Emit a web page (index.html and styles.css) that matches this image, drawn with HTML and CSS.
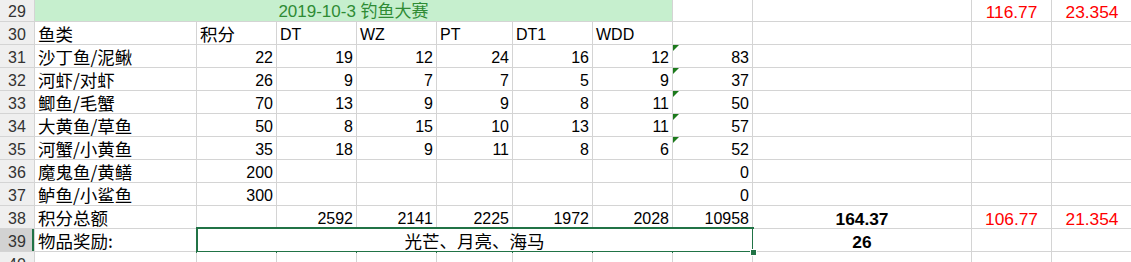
FILE: index.html
```html
<!DOCTYPE html>
<html lang="zh">
<head>
<meta charset="utf-8">
<title>钓鱼大赛</title>
<link rel="stylesheet" href="styles.css">
</head>
<body>
<div class="sheet">
  <!-- row 29 -->
  <div class="rh">29</div>
  <div class="c title span7">2019-10-3 钓鱼大赛</div>
  <div class="c"></div>
  <div class="c"></div>
  <div class="c big red ctr">116.77</div>
  <div class="c big red ctr">23.354</div>

  <!-- row 30 -->
  <div class="rh">30</div>
  <div class="c t">鱼类</div>
  <div class="c t">积分</div>
  <div class="c">DT</div>
  <div class="c">WZ</div>
  <div class="c">PT</div>
  <div class="c">DT1</div>
  <div class="c">WDD</div>
  <div class="c"></div>
  <div class="c"></div>
  <div class="c"></div>
  <div class="c"></div>

  <!-- row 31 -->
  <div class="rh">31</div>
  <div class="c t">沙丁鱼/泥鳅</div>
  <div class="c n">22</div>
  <div class="c n">19</div>
  <div class="c n">12</div>
  <div class="c n">24</div>
  <div class="c n">16</div>
  <div class="c n">12</div>
  <div class="c n flag">83</div>
  <div class="c"></div>
  <div class="c"></div>
  <div class="c"></div>

  <!-- row 32 -->
  <div class="rh">32</div>
  <div class="c t">河虾/对虾</div>
  <div class="c n">26</div>
  <div class="c n">9</div>
  <div class="c n">7</div>
  <div class="c n">7</div>
  <div class="c n">5</div>
  <div class="c n">9</div>
  <div class="c n flag">37</div>
  <div class="c"></div>
  <div class="c"></div>
  <div class="c"></div>

  <!-- row 33 -->
  <div class="rh">33</div>
  <div class="c t">鲫鱼/毛蟹</div>
  <div class="c n">70</div>
  <div class="c n">13</div>
  <div class="c n">9</div>
  <div class="c n">9</div>
  <div class="c n">8</div>
  <div class="c n">11</div>
  <div class="c n flag">50</div>
  <div class="c"></div>
  <div class="c"></div>
  <div class="c"></div>

  <!-- row 34 -->
  <div class="rh">34</div>
  <div class="c t">大黄鱼/草鱼</div>
  <div class="c n">50</div>
  <div class="c n">8</div>
  <div class="c n">15</div>
  <div class="c n">10</div>
  <div class="c n">13</div>
  <div class="c n">11</div>
  <div class="c n flag">57</div>
  <div class="c"></div>
  <div class="c"></div>
  <div class="c"></div>

  <!-- row 35 -->
  <div class="rh">35</div>
  <div class="c t">河蟹/小黄鱼</div>
  <div class="c n">35</div>
  <div class="c n">18</div>
  <div class="c n">9</div>
  <div class="c n">11</div>
  <div class="c n">8</div>
  <div class="c n">6</div>
  <div class="c n flag">52</div>
  <div class="c"></div>
  <div class="c"></div>
  <div class="c"></div>

  <!-- row 36 -->
  <div class="rh">36</div>
  <div class="c t">魔鬼鱼/黄鳝</div>
  <div class="c n">200</div>
  <div class="c"></div>
  <div class="c"></div>
  <div class="c"></div>
  <div class="c"></div>
  <div class="c"></div>
  <div class="c n">0</div>
  <div class="c"></div>
  <div class="c"></div>
  <div class="c"></div>

  <!-- row 37 -->
  <div class="rh">37</div>
  <div class="c t">鲈鱼/小鲨鱼</div>
  <div class="c n">300</div>
  <div class="c"></div>
  <div class="c"></div>
  <div class="c"></div>
  <div class="c"></div>
  <div class="c"></div>
  <div class="c n">0</div>
  <div class="c"></div>
  <div class="c"></div>
  <div class="c"></div>

  <!-- row 38 -->
  <div class="rh">38</div>
  <div class="c t">积分总额</div>
  <div class="c"></div>
  <div class="c n">2592</div>
  <div class="c n">2141</div>
  <div class="c n">2225</div>
  <div class="c n">1972</div>
  <div class="c n">2028</div>
  <div class="c n">10958</div>
  <div class="c big bold ctr">164.37</div>
  <div class="c big red ctr">106.77</div>
  <div class="c big red ctr">21.354</div>

  <!-- row 39 -->
  <div class="rh rh-sel">39</div>
  <div class="c t">物品奖励:</div>
  <div class="c t ctr span7 sel">光芒、月亮、海马<span class="handle"></span></div>
  <div class="c big bold ctr">26</div>
  <div class="c"></div>
  <div class="c"></div>

  <!-- row 40 -->
  <div class="rh">40</div>
  <div class="c"></div>
  <div class="c"></div>
  <div class="c"></div>
  <div class="c"></div>
  <div class="c"></div>
  <div class="c"></div>
  <div class="c"></div>
  <div class="c"></div>
  <div class="c"></div>
  <div class="c"></div>
  <div class="c"></div>
</div>
</body>
</html>
```

FILE: styles.css
```css
html, body {
  margin: 0;
  padding: 0;
  background: #ffffff;
  overflow: hidden;
}

.sheet {
  display: grid;
  grid-template-columns: 34px 161px 79px 79px 79px 75px 79px 79px 79px 218px 79px 80px;
  grid-template-rows: repeat(11, 22px) 22px;
  gap: 1px;
  background: #d4d4d4;
  margin-top: -1px;
  width: 1132px;
  font-family: "Liberation Sans", "Noto Sans CJK SC", sans-serif;
  font-size: 16px;
  color: #000000;
}

.rh {
  background: #efefef;
  color: #333333;
  text-align: center;
  line-height: 18px;
  padding-top: 4px;
  font-size: 16px;
  overflow: hidden;
}

.rh-sel {
  background: #d2d2d2;
  box-shadow: inset -2px 0 0 #217346;
}

.c {
  background: #ffffff;
  line-height: 18px;
  padding: 4px 3px 0 3px;
  white-space: nowrap;
  overflow: visible;
  position: relative;
  min-width: 0;
}

.t {
  font-family: "Noto Sans CJK SC", sans-serif;
  font-size: 17.5px;
  padding-top: 3px;
}

.n {
  text-align: right;
}

.ctr {
  text-align: center;
}

.big {
  font-size: 17.33px;
}

.bold {
  font-weight: bold;
}

.red {
  color: #ff0000;
}

.span7 {
  grid-column: span 7;
}

.title {
  background: #c6efce;
  color: #2e8b34;
  text-align: center;
  font-size: 17px;
}

.flag::before {
  content: "";
  position: absolute;
  left: 0;
  top: 0;
  width: 0;
  height: 0;
  border-top: 6px solid #1c7a1c;
  border-right: 6px solid transparent;
}

.sel::after {
  content: "";
  position: absolute;
  left: -1px;
  top: -2px;
  right: -2px;
  bottom: -2px;
  border: 2px solid #217346;
  pointer-events: none;
}

.handle {
  position: absolute;
  right: -5px;
  bottom: -5px;
  width: 5px;
  height: 5px;
  background: #217346;
  border: 1px solid #ffffff;
  z-index: 2;
}
```
